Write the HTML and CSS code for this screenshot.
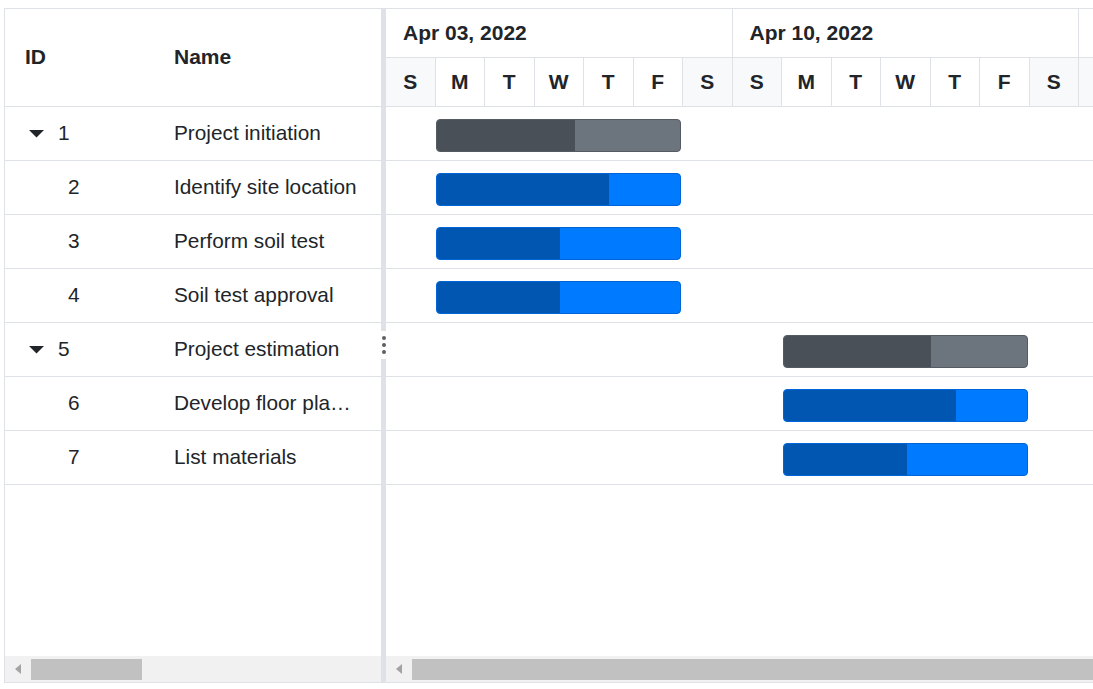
FILE: index.html
```html
<!DOCTYPE html>
<html lang="en">
<head>
<meta charset="utf-8">
<title>Gantt</title>
<link rel="stylesheet" href="styles.css">
</head>
<body>
<div class="gantt">
  <div class="grid-pane">
    <div class="grid-header">
      <div class="col-id hcell">ID</div>
      <div class="col-name hcell">Name</div>
    </div>
    <div class="grid-body">
      <div class="grow">
        <div class="col-id cell"><span class="caret"><svg width="15" height="8" viewBox="0 0 15 8"><polygon points="0,0 15,0 7.5,7.5" fill="#212529"/></svg></span>1</div>
        <div class="col-name cell">Project initiation</div>
      </div>
      <div class="grow">
        <div class="col-id cell child">2</div>
        <div class="col-name cell">Identify site location</div>
      </div>
      <div class="grow">
        <div class="col-id cell child">3</div>
        <div class="col-name cell">Perform soil test</div>
      </div>
      <div class="grow">
        <div class="col-id cell child">4</div>
        <div class="col-name cell">Soil test approval</div>
      </div>
      <div class="grow">
        <div class="col-id cell"><span class="caret"><svg width="15" height="8" viewBox="0 0 15 8"><polygon points="0,0 15,0 7.5,7.5" fill="#212529"/></svg></span>5</div>
        <div class="col-name cell">Project estimation</div>
      </div>
      <div class="grow">
        <div class="col-id cell child">6</div>
        <div class="col-name cell">Develop floor plan for estimation</div>
      </div>
      <div class="grow">
        <div class="col-id cell child">7</div>
        <div class="col-name cell">List materials</div>
      </div>
    </div>
    <div class="hscroll">
      <span class="arrow"><svg width="6" height="10" viewBox="0 0 6 10"><polygon points="6,0 6,10 0,5" fill="#a3a3a3"/></svg></span>
      <span class="thumb thumb-left"></span>
    </div>
  </div>
  <div class="splitter">
    <div class="handle"><i></i><i></i><i></i></div>
  </div>
  <div class="chart-pane">
    <div class="chart-header">
      <div class="weeks">
        <div class="week">Apr 03, 2022</div>
        <div class="week">Apr 10, 2022</div>
        <div class="week"></div>
      </div>
      <div class="days">
        <div class="day wkend">S</div><div class="day">M</div><div class="day">T</div><div class="day">W</div><div class="day">T</div><div class="day">F</div><div class="day wkend">S</div>
        <div class="day wkend">S</div><div class="day">M</div><div class="day">T</div><div class="day">W</div><div class="day">T</div><div class="day">F</div><div class="day wkend">S</div>
        <div class="day wkend"></div><div class="day"></div>
      </div>
    </div>
    <div class="chart-body">
      <div class="crow"><div class="bar parent" style="margin-left:50px"><div class="prog" style="width:138px"></div></div></div>
      <div class="crow"><div class="bar child" style="margin-left:50px"><div class="prog" style="width:172px"></div></div></div>
      <div class="crow"><div class="bar child" style="margin-left:50px"><div class="prog" style="width:123px"></div></div></div>
      <div class="crow"><div class="bar child" style="margin-left:50px"><div class="prog" style="width:123px"></div></div></div>
      <div class="crow"><div class="bar parent" style="margin-left:397px"><div class="prog" style="width:147px"></div></div></div>
      <div class="crow"><div class="bar child" style="margin-left:397px"><div class="prog" style="width:172px"></div></div></div>
      <div class="crow"><div class="bar child" style="margin-left:397px"><div class="prog" style="width:123px"></div></div></div>
    </div>
    <div class="hscroll">
      <span class="arrow"><svg width="6" height="10" viewBox="0 0 6 10"><polygon points="6,0 6,10 0,5" fill="#a3a3a3"/></svg></span>
      <span class="thumb thumb-right"></span>
    </div>
  </div>
</div>
</body>
</html>
```

FILE: styles.css
```css
html, body {
  margin: 0;
  padding: 0;
  background: #ffffff;
}
body {
  padding: 8px 0 0 4px;
  overflow: hidden;
  font-family: "Liberation Sans", Arial, sans-serif;
  color: #212529;
  font-size: 20.8px;
}
.gantt {
  box-sizing: border-box;
  width: 1130px;
  height: 675px;
  border: 1px solid #dee2e6;
  display: flex;
}
.grid-pane {
  width: 376px;
  flex: none;
  display: flex;
  flex-direction: column;
}
.grid-header {
  box-sizing: border-box;
  height: 98px;
  border-bottom: 1px solid #dee2e6;
  display: flex;
  align-items: center;
  font-weight: bold;
  font-size: 21px;
  padding-bottom: 2px;
}
.col-id {
  box-sizing: border-box;
  width: 150px;
  flex: none;
  padding-left: 20px;
}
.col-name {
  box-sizing: border-box;
  flex: 1;
  min-width: 0;
  padding-left: 19px;
  padding-right: 21px;
}
.grid-body {
  flex: 1;
}
.grow {
  box-sizing: border-box;
  height: 54px;
  border-bottom: 1px solid #dee2e6;
  display: flex;
  align-items: center;
  padding-bottom: 1px;
}
.cell {
  white-space: nowrap;
  overflow: hidden;
  text-overflow: ellipsis;
}
.col-id.cell {
  display: flex;
  align-items: center;
}
.col-id.child {
  padding-left: 63px;
}
.caret {
  display: inline-flex;
  margin-left: 4px;
  margin-right: 14px;
  margin-top: 1px;
}
.hscroll {
  box-sizing: border-box;
  height: 26px;
  flex: none;
  background: #f1f1f1;
  display: flex;
  align-items: flex-start;
  overflow: hidden;
}
.hscroll .arrow {
  display: inline-flex;
  margin-top: 8px;
  margin-left: 10px;
}
.thumb {
  display: block;
  height: 21px;
  margin-top: 3px;
  background: #c1c1c1;
}
.thumb-left {
  margin-left: 10px;
  width: 111px;
}
.thumb-right {
  margin-left: 10px;
  flex: 1;
}
.splitter {
  width: 5px;
  flex: none;
  background: #dee2e6;
  position: relative;
}
.handle {
  position: absolute;
  left: 0;
  top: 322px;
  width: 5px;
  height: 28px;
  background: #ffffff;
  display: flex;
  flex-direction: column;
  align-items: center;
  justify-content: center;
  gap: 3px;
}
.handle i {
  display: block;
  width: 4px;
  height: 4px;
  border-radius: 50%;
  background: #5b6065;
}
.chart-pane {
  flex: 1;
  min-width: 0;
  display: flex;
  flex-direction: column;
  overflow: hidden;
}
.chart-header {
  height: 98px;
  flex: none;
  font-weight: bold;
  font-size: 21px;
}
.weeks {
  box-sizing: border-box;
  height: 49px;
  border-bottom: 1px solid #dee2e6;
  display: flex;
}
.week {
  box-sizing: border-box;
  width: 346.5px;
  flex: none;
  border-right: 1px solid #dee2e6;
  padding-left: 17px;
  padding-bottom: 1px;
  display: flex;
  align-items: center;
  white-space: nowrap;
}
.days {
  box-sizing: border-box;
  height: 49px;
  border-bottom: 1px solid #dee2e6;
  display: flex;
}
.day {
  box-sizing: border-box;
  width: 49.5px;
  flex: none;
  border-right: 1px solid #dee2e6;
  display: flex;
  align-items: center;
  justify-content: center;
  padding-bottom: 1px;
}
.day.wkend {
  background: #f8f9fa;
}
.chart-body {
  flex: 1;
}
.crow {
  box-sizing: border-box;
  height: 54px;
  border-bottom: 1px solid #dee2e6;
  padding-top: 12px;
}
.bar {
  box-sizing: border-box;
  width: 245px;
  height: 33px;
  border: 1px solid;
  border-radius: 4px;
  overflow: hidden;
  display: flex;
}
.bar .prog {
  height: 100%;
  border-radius: 3px 0 0 3px;
}
.bar.parent {
  background: #6c757d;
  border-color: #565b61;
}
.bar.parent .prog {
  background: #4a5058;
}
.bar.child {
  background: #007bff;
  border-color: #0065d6;
}
.bar.child .prog {
  background: #0056b0;
}
```
